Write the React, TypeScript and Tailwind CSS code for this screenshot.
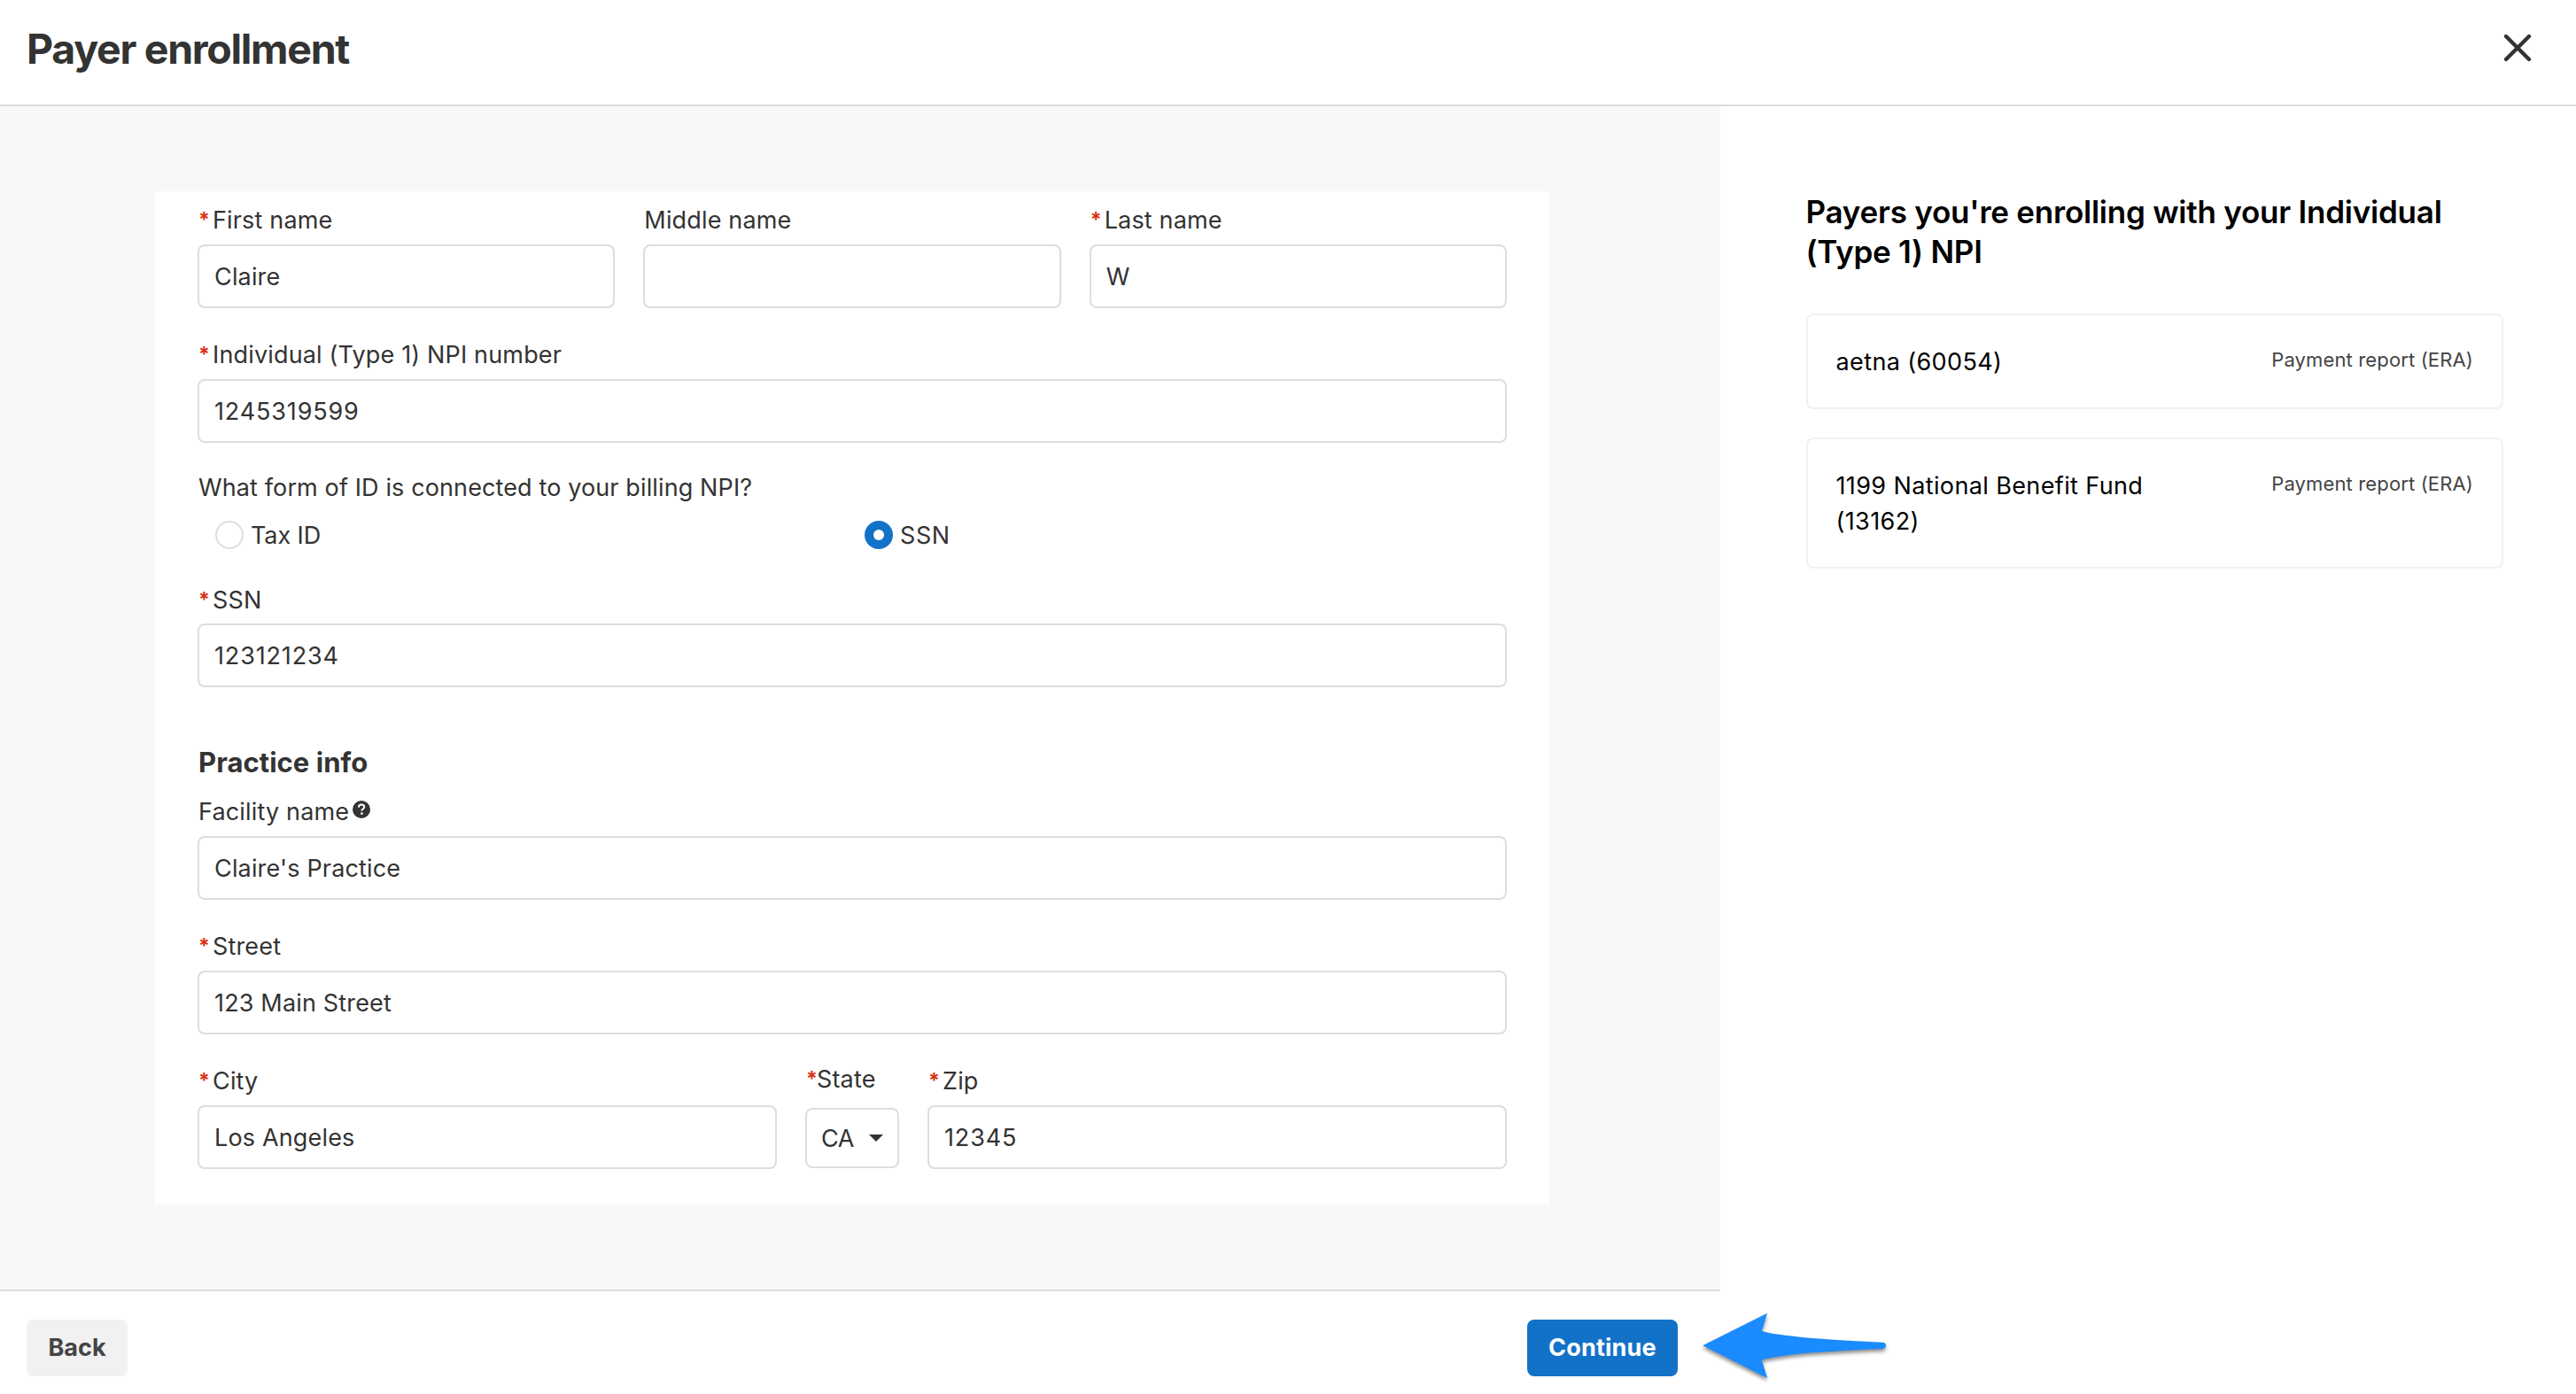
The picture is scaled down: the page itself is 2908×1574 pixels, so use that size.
import React from "react";

function Star({ className = "w-[17px]" }: { className?: string }) {
  return (
    <span
      className={`-mt-[3px] inline-block shrink-0 pl-[1px] text-[23px] font-bold text-[#d9300f] ${className}`}
      aria-hidden="true"
    >
      *
    </span>
  );
}

function Label({ text, required, children }: { text: string; required?: boolean; children?: React.ReactNode }) {
  return (
    <label className={`flex h-[40px] items-center pt-[2px] leading-[38px] whitespace-nowrap ${required ? "" : "pl-[1px]"}`}>
      {required && <Star />}
      <span>{text}</span>
      {children}
    </label>
  );
}

type FieldProps = {
  label: string;
  value: string;
  required?: boolean;
  numeric?: boolean;
  gap?: string;
  icon?: React.ReactNode;
};

function Field({ label, value, required, numeric, gap = "mt-[8px]", icon }: FieldProps) {
  return (
    <div className="min-w-0">
      <Label text={label} required={required}>
        {icon}
      </Label>
      <div
        className={`flex h-[72px] items-center rounded-[8px] border-2 border-[#dddddd] bg-white px-[17px] pt-[2px] ${gap} ${
          numeric ? "tracking-[0.85px]" : ""
        }`}
      >
        {value}
      </div>
    </div>
  );
}

function HelpIcon() {
  return (
    <svg className="mb-[6px] ml-[4px] size-[20px]" viewBox="0 0 20 20">
      <circle cx="10" cy="10" r="10" fill="#333333" />
      <path d="M6.9 7.6C7 5.6 8.3 4.6 10.1 4.6c1.8 0 3.1 1 3.1 2.6 0 2.2-2.9 2.2-2.9 4.4" fill="none" stroke="#fff" strokeWidth="2" />
      <rect x="9.2" y="13.4" width="2.4" height="2.4" fill="#fff" />
    </svg>
  );
}

function Radio({ label, checked, className }: { label: string; checked?: boolean; className: string }) {
  return (
    <div className={`flex items-center ${className}`}>
      {checked ? (
        <span className="flex size-[32px] items-center justify-center rounded-full bg-[#1272c8]">
          <span className="size-[12px] rounded-full bg-white" />
        </span>
      ) : (
        <span className="size-[32px] rounded-full border-2 border-[#dddddd]" />
      )}
      <span className="ml-[8px] pt-[2px] leading-[38px]">{label}</span>
    </div>
  );
}

function PayerCard({ name }: { name: string }) {
  return (
    <div className="flex items-start justify-between rounded-[8px] border-2 border-[#f1f1f1] px-[32px] pt-[33px] pb-[31px] text-black">
      <span className="max-w-[400px] leading-[40px] tracking-[0.38px]">{name}</span>
      <span className="-mt-[1px] text-[22px] leading-[36px] tracking-[0.14px] whitespace-nowrap text-[#444444]">
        Payment report (ERA)
      </span>
    </div>
  );
}

export default function App() {
  return (
    <div className="flex h-[1574px] w-[2908px] flex-col overflow-hidden bg-white font-['Inter',sans-serif] text-[27px] tracking-[0.16px] text-[#333333]">
      <header className="flex h-[120px] shrink-0 items-center justify-between border-b-2 border-[#dddddd] pr-[50px] pb-[8px] pl-[30px]">
        <h1 className="text-[46.5px] leading-[60px] font-bold tracking-[-1.3px]">Payer enrollment</h1>
        <svg className="mb-[2px] size-[32px]" viewBox="0 0 32 32" stroke="#333333" strokeWidth="4.4" strokeLinecap="round">
          <path d="M3 3L29 29M29 3L3 29" />
        </svg>
      </header>

      <div className="flex min-h-0 flex-1">
        <div className="flex w-[1942px] shrink-0 flex-col">
          <main className="flex h-[1338px] flex-col border-b-2 border-[#dddddd] bg-[#f8f8f8] pt-[96px] pl-[175px]">
            <section className="flex h-[1144px] w-[1574px] flex-col bg-white px-[48px] pt-[12px]">
              <div className="grid grid-cols-3 gap-[32px]">
                <Field label="First name" value="Claire" required />
                <Field label="Middle name" value="" />
                <Field label="Last name" value="W" required />
              </div>

              <div className="mt-[32px]">
                <Field label="Individual (Type 1) NPI number" value="1245319599" required numeric />
              </div>

              <div className="mt-[31px] pl-[1px] leading-[40px] tracking-[0.12px]">
                What form of ID is connected to your billing NPI?
              </div>
              <div className="mt-[17px] flex h-[32px] items-center pl-[20px]">
                <Radio label="Tax ID" className="w-[733px] tracking-[-0.1px]" />
                <Radio label="SSN" checked className="tracking-[0.6px]" />
              </div>

              <div className="mt-[37px]">
                <Field label="SSN" value="123121234" required numeric gap="mt-[7px]" />
              </div>

              <h2 className="mt-[65px] pl-[1px] text-[31px] leading-[40px] font-bold tracking-[0.05px]">Practice info</h2>
              <div className="mt-[15px]">
                <Field label="Facility name" value="Claire's Practice" icon={<HelpIcon />} />
              </div>

              <div className="mt-[32px]">
                <Field label="Street" value="123 Main Street" required />
              </div>

              <div className="mt-[32px] grid grid-cols-[654px_106px_654px] gap-[32px]">
                <Field label="City" value="Los Angeles" required />
                <div className="-mt-[2px]">
                  <label className="flex h-[40px] items-center pt-[2px] leading-[38px]">
                    <Star className="w-[13px]" />
                    <span>State</span>
                  </label>
                  <div className="mt-[13px] flex h-[68px] items-center rounded-[8px] border-2 border-[#dddddd] pl-[16px]">
                    <span className="w-[54px] pt-[2px] tracking-[-0.4px]">CA</span>
                    <svg className="h-[8px] w-[16px]" viewBox="0 0 16 8" fill="#333333">
                      <path d="M0 0H16L8 8Z" />
                    </svg>
                  </div>
                </div>
                <Field label="Zip" value="12345" required numeric />
              </div>
            </section>
          </main>

          <footer className="flex h-[116px] items-start justify-between pt-[32px] pr-[48px] pl-[30px]">
            <button className="h-[64px] w-[114px] rounded-[8px] bg-[#f1f1f1] font-bold tracking-[0px] text-[#444444]">Back</button>
            <div className="relative">
              <button className="h-[64px] w-[170px] rounded-[8px] bg-[#1272c8] font-bold tracking-[0.19px] text-white">Continue</button>
              <svg
                className="absolute top-[-14px] left-[192px] h-[90px] w-[220px] drop-shadow-[0_3px_2px_rgba(0,0,0,0.45)]"
                viewBox="1916 1476 220 90"
                fill="#1a8cff"
              >
                <path d="M1922.2 1519.3L1995 1482.7L1988.8 1503C2010 1509 2060 1512.5 2125 1515.7Q2129 1516 2129 1519.3Q2129 1522.6 2125 1523C2060 1525.5 2010 1529 1988.8 1535.5L1995 1556Z" />
              </svg>
            </div>
          </footer>
        </div>

        <aside className="flex-1 pt-[97px] pr-[82px] pl-[96.5px]">
          <h2 className="text-[35px] leading-[45px] font-semibold tracking-[-0.23px] text-black">
            Payers you're enrolling with your Individual
            <br />
            (Type 1) NPI
          </h2>
          <div className="mt-[47px] flex flex-col gap-[32px]">
            <PayerCard name="aetna (60054)" />
            <PayerCard name="1199 National Benefit Fund (13162)" />
          </div>
        </aside>
      </div>
    </div>
  );
}
